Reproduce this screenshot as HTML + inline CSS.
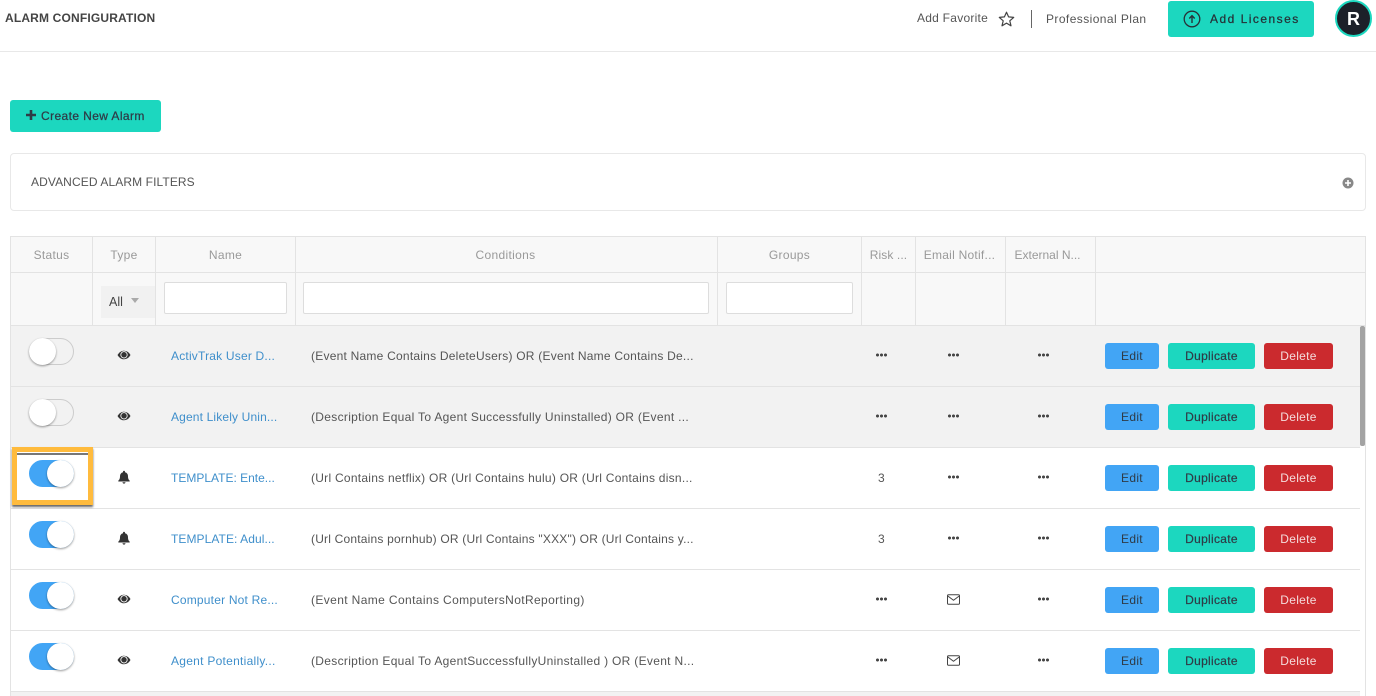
<!DOCTYPE html>
<html><head><meta charset="utf-8"><style>
*{box-sizing:border-box}
html,body{margin:0;padding:0;background:#fff}
body{width:1376px;height:696px;overflow:hidden;position:relative;font-family:"Liberation Sans",sans-serif;font-size:12px;color:#555}
.a{position:absolute;white-space:nowrap}
.t{position:absolute;white-space:nowrap;line-height:16px;height:16px}
.h{color:#999;letter-spacing:.3px;text-align:center;top:247px}
.v{position:absolute;background:#e3e3e3;width:1px}
.row{position:absolute;left:11px;width:1349px;height:61px;border-bottom:1px solid #e3e3e3}
.row.g{background:#f2f2f2}
.row>*{position:absolute}
.tg{left:18px;top:12px;width:45px;height:27px;border-radius:14px;background:#f2f2f2;border:1px solid #ccc}
.tg i{position:absolute;left:-1px;top:-1px;width:27px;height:27px;border-radius:50%;background:#fff;box-shadow:0 1px 2px rgba(0,0,0,.4)}
.tg.on{background:#42a5f5;border-color:#42a5f5}
.tg.on i{left:17px}
.nm{left:160px;top:22px;color:#3f8fcb;line-height:16px;letter-spacing:.2px}
.cd{left:300px;top:22px;color:#555;line-height:16px}
.ic{left:106px;top:22px}
.d1,.d2,.d3{top:27px;width:11px;height:4px;background:radial-gradient(circle at 1.5px 2px,#444 1.4px,transparent 1.6px) 0 0/4px 4px repeat-x}
.d1{left:865px}.d2{left:937px}.d3{left:1027px}
.n3{left:867px;top:22px;line-height:16px;color:#555}
.env{left:936px;top:24px}
.b{top:17px;height:26px;border-radius:3px;text-align:center;line-height:26px;letter-spacing:.3px;color:#2f3b46}
.e{left:1094px;width:54px;background:#42a5f5}
.du{left:1157px;width:87px;background:#1cd7bf;font-weight:400;-webkit-text-stroke:.2px #2f3b46}
.de{left:1253px;width:69px;background:#cb2a2e;color:#f4dcdc}
</style></head><body>

<!-- header -->
<div class="t" style="left:5px;top:10px;font-weight:700;color:#444;font-size:12px;letter-spacing:.17px">ALARM CONFIGURATION</div>
<div class="t" style="left:917px;top:10px;color:#555;letter-spacing:.25px">Add Favorite</div>
<svg class="a" style="left:998px;top:11px" width="17" height="16" viewBox="0 0 17 16"><path d="M8.5 1.2l2.1 4.7 5.1.5-3.9 3.4 1.2 5-4.5-2.7-4.5 2.7 1.2-5L1.3 6.400l5.100-.5z" fill="none" stroke="#444" stroke-width="1.200" stroke-linejoin="round"/></svg>
<div class="a" style="left:1031px;top:10px;width:1px;height:18px;background:#666"></div>
<div class="t" style="left:1046px;top:11px;color:#555;letter-spacing:.42px">Professional Plan</div>
<div class="a" style="left:1168px;top:1px;width:146px;height:36px;background:#1cd7bf;border-radius:3px"></div>
<svg class="a" style="left:1183px;top:10px" width="18" height="18" viewBox="0 0 18 18"><circle cx="9" cy="9" r="7.800" fill="none" stroke="#263238" stroke-width="1.300"/><path d="M9 13V6M6.300 8.500L9 5.600l2.700 2.900" fill="none" stroke="#263238" stroke-width="1.400"/></svg>
<div class="t" style="left:1210px;top:11px;color:#263238;letter-spacing:1.47px;-webkit-text-stroke:.25px #263238">Add Licenses</div>
<div class="a" style="left:1335px;top:0;width:37px;height:37px;border-radius:50%;background:#1c2029;border:2px solid #1cd7bf;color:#fff;font-weight:700;font-size:18px;line-height:34px;text-align:center">R</div>
<div class="a" style="left:0;top:51px;width:1376px;height:1px;background:#e8e8e8"></div>

<!-- create -->
<div class="a" style="left:10px;top:100px;width:151px;height:32px;background:#1cd7bf;border-radius:3px"></div>
<svg class="a" style="left:26px;top:110px" width="10" height="10"><path d="M5 0v10M0 5h10" stroke="#2f3b46" stroke-width="2.600"/></svg>
<div class="t" style="left:41px;top:108px;color:#2f3b46;letter-spacing:.4px;-webkit-text-stroke:.25px #2f3b46">Create New Alarm</div>

<!-- filters -->
<div class="a" style="left:10px;top:153px;width:1356px;height:58px;border:1px solid #e8e8e8;border-radius:4px"></div>
<div class="t" style="left:31px;top:174px;color:#555;letter-spacing:.1px">ADVANCED ALARM FILTERS</div>
<svg class="a" style="left:1342px;top:177px" width="12" height="12"><circle cx="6" cy="6" r="5.500" fill="#888"/><path d="M6 3v6M3 6h6" stroke="#fff" stroke-width="1.600"/></svg>

<!-- table head -->
<div class="a" style="left:10px;top:236px;width:1356px;height:90px;background:#f8f8f8;border:1px solid #e3e3e3"></div>
<div class="a" style="left:10px;top:272px;width:1356px;height:1px;background:#e3e3e3"></div>
<div class="v" style="left:92px;top:236px;height:90px"></div>
<div class="v" style="left:155px;top:236px;height:90px"></div>
<div class="v" style="left:295px;top:236px;height:90px"></div>
<div class="v" style="left:717px;top:236px;height:90px"></div>
<div class="v" style="left:861px;top:236px;height:90px"></div>
<div class="v" style="left:915px;top:236px;height:90px"></div>
<div class="v" style="left:1005px;top:236px;height:90px"></div>
<div class="v" style="left:1095px;top:236px;height:90px"></div>
<div class="t h" style="left:11px;width:81px">Status</div>
<div class="t h" style="left:93px;width:62px">Type</div>
<div class="t h" style="left:156px;width:139px">Name</div>
<div class="t h" style="left:295px;width:421px;letter-spacing:.33px">Conditions</div>
<div class="t h" style="left:718px;width:143px">Groups</div>
<div class="t h" style="left:862px;width:53px;letter-spacing:.1px">Risk ...</div>
<div class="t h" style="left:915px;width:89px;letter-spacing:.25px">Email Notif...</div>
<div class="t h" style="left:1003px;width:89px;letter-spacing:0">External N...</div>

<div class="a" style="left:101px;top:286px;width:54px;height:32px;background:#f1f1f1"></div>
<div class="t" style="left:109px;top:294px;color:#444;font-size:12.500px">All</div>
<div class="a" style="left:131px;top:298px;width:0;height:0;border-left:4px solid transparent;border-right:4px solid transparent;border-top:5px solid #aaa"></div>
<div class="a" style="left:164px;top:282px;width:123px;height:32px;background:#fff;border:1px solid #ddd;border-radius:2px"></div>
<div class="a" style="left:303px;top:282px;width:406px;height:32px;background:#fff;border:1px solid #ddd;border-radius:2px"></div>
<div class="a" style="left:726px;top:282px;width:127px;height:32px;background:#fff;border:1px solid #ddd;border-radius:2px"></div>

<!-- rows -->
<div class="a" style="left:10px;top:326px;width:1px;height:370px;background:#e3e3e3"></div>

<div class="row g" style="top:326px">
<div class="tg"><i></i></div>
<svg class="ic" width="14" height="14" viewBox="0 0 14 14"><path d="M.5 7C2.500 3.800 4.600 2.700 7 2.700S11.500 3.800 13.500 7C11.500 10.200 9.400 11.300 7 11.300S2.500 10.200.5 7z" fill="#333"/><circle cx="7" cy="6.800" r="3.200" fill="#333" stroke="#f2f2f2" stroke-width=".9"/></svg>
<div class="nm">ActivTrak User D...</div>
<div class="cd" style="letter-spacing:.23px">(Event Name Contains DeleteUsers) OR (Event Name Contains De...</div>
<div class="d1"></div><div class="d2"></div><div class="d3"></div>
<div class="b e">Edit</div><div class="b du">Duplicate</div><div class="b de">Delete</div>
</div>

<div class="row g" style="top:387px">
<div class="tg"><i></i></div>
<svg class="ic" width="14" height="14" viewBox="0 0 14 14"><path d="M.5 7C2.500 3.800 4.600 2.700 7 2.700S11.500 3.800 13.500 7C11.500 10.200 9.400 11.300 7 11.300S2.500 10.200.5 7z" fill="#333"/><circle cx="7" cy="6.800" r="3.200" fill="#333" stroke="#f2f2f2" stroke-width=".9"/></svg>
<div class="nm" style="letter-spacing:.15px">Agent Likely Unin...</div>
<div class="cd" style="letter-spacing:.31px">(Description Equal To Agent Successfully Uninstalled) OR (Event ...</div>
<div class="d1"></div><div class="d2"></div><div class="d3"></div>
<div class="b e">Edit</div><div class="b du">Duplicate</div><div class="b de">Delete</div>
</div>

<div class="row" style="top:448px">
<div class="tg on"><i></i></div>
<svg class="ic" width="14" height="14" viewBox="0 0 14 14"><path d="M7 .8c.6 0 1 .4 1 1v.4c2 .5 3 2 3 4.100 0 2.400.6 3.400 1.700 4.400v.8H1.300v-.8C2.400 9.700 3 8.700 3 6.300c0-2.100 1-3.600 3-4.100v-.4c0-.6.4-1 1-1zM5.500 12.300h3C8.400 13.200 7.800 13.700 7 13.700s-1.400-.5-1.500-1.400z" fill="#333"/></svg>
<div class="nm" style="letter-spacing:0">TEMPLATE: Ente...</div>
<div class="cd" style="letter-spacing:.26px">(Url Contains netflix) OR (Url Contains hulu) OR (Url Contains disn...</div>
<div class="n3">3</div><div class="d2"></div><div class="d3"></div>
<div class="b e">Edit</div><div class="b du">Duplicate</div><div class="b de">Delete</div>
</div>

<div class="row" style="top:509px">
<div class="tg on"><i></i></div>
<svg class="ic" width="14" height="14" viewBox="0 0 14 14"><path d="M7 .8c.6 0 1 .4 1 1v.4c2 .5 3 2 3 4.100 0 2.400.6 3.400 1.700 4.400v.8H1.300v-.8C2.400 9.700 3 8.700 3 6.300c0-2.100 1-3.600 3-4.100v-.4c0-.6.4-1 1-1zM5.500 12.300h3C8.400 13.200 7.800 13.700 7 13.700s-1.400-.5-1.500-1.400z" fill="#333"/></svg>
<div class="nm" style="letter-spacing:.07px">TEMPLATE: Adul...</div>
<div class="cd" style="letter-spacing:.2px">(Url Contains pornhub) OR (Url Contains "XXX") OR (Url Contains y...</div>
<div class="n3">3</div><div class="d2"></div><div class="d3"></div>
<div class="b e">Edit</div><div class="b du">Duplicate</div><div class="b de">Delete</div>
</div>

<div class="row" style="top:570px">
<div class="tg on"><i></i></div>
<svg class="ic" width="14" height="14" viewBox="0 0 14 14"><path d="M.5 7C2.500 3.800 4.600 2.700 7 2.700S11.500 3.800 13.500 7C11.500 10.200 9.400 11.300 7 11.300S2.500 10.200.5 7z" fill="#333"/><circle cx="7" cy="6.800" r="3.200" fill="#333" stroke="#fff" stroke-width=".9"/></svg>
<div class="nm">Computer Not Re...</div>
<div class="cd" style="letter-spacing:.38px">(Event Name Contains ComputersNotReporting)</div>
<div class="d1"></div>
<svg class="env" width="13" height="11" viewBox="0 0 13 11"><rect x=".5" y=".8" width="12" height="9.400" rx="1" fill="none" stroke="#444"/><path d="M.8 2l5.700 4.300L12.200 2" fill="none" stroke="#444"/></svg>
<div class="d3"></div>
<div class="b e">Edit</div><div class="b du">Duplicate</div><div class="b de">Delete</div>
</div>

<div class="row" style="top:631px">
<div class="tg on"><i></i></div>
<svg class="ic" width="14" height="14" viewBox="0 0 14 14"><path d="M.5 7C2.500 3.800 4.600 2.700 7 2.700S11.500 3.800 13.500 7C11.500 10.200 9.400 11.300 7 11.300S2.500 10.200.5 7z" fill="#333"/><circle cx="7" cy="6.800" r="3.200" fill="#333" stroke="#fff" stroke-width=".9"/></svg>
<div class="nm" style="letter-spacing:.27px">Agent Potentially...</div>
<div class="cd" style="letter-spacing:.31px">(Description Equal To AgentSuccessfullyUninstalled ) OR (Event N...</div>
<div class="d1"></div>
<svg class="env" width="13" height="11" viewBox="0 0 13 11"><rect x=".5" y=".8" width="12" height="9.400" rx="1" fill="none" stroke="#444"/><path d="M.8 2l5.700 4.300L12.200 2" fill="none" stroke="#444"/></svg>
<div class="d3"></div>
<div class="b e">Edit</div><div class="b du">Duplicate</div><div class="b de">Delete</div>
</div>

<div class="a" style="left:11px;top:692px;width:1349px;height:4px;background:#f2f2f2"></div>

<!-- scrollbar + right border -->
<div class="a" style="left:1365px;top:326px;width:1px;height:370px;background:#e3e3e3"></div>
<div class="a" style="left:1360px;top:326px;width:5px;height:120px;background:#a3a3a3;border-radius:2px"></div>

<!-- highlight -->
<div class="a" style="left:12px;top:447px;width:81px;height:58px;border:5px solid #ffbb3d;box-shadow:0 2px 2px rgba(0,0,0,.6)"></div>
<div class="a" style="left:17px;top:453px;width:71px;height:2px;background:#777"></div>
</body></html>
